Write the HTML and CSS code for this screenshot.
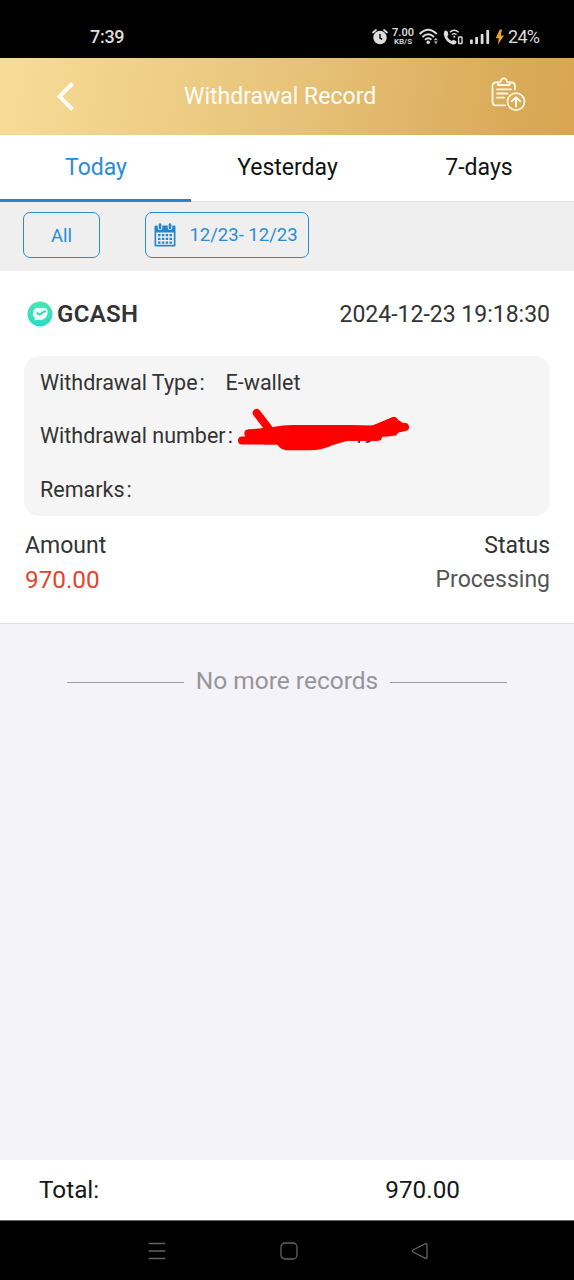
FILE: index.html
```html
<!DOCTYPE html>
<html lang="en">
<head>
<meta charset="utf-8">
<title>Withdrawal Record</title>
<link rel="stylesheet" href="styles.css">
</head>
<body>
<div class="status-bar">
  <span class="clock">7:39</span>
  <div class="indicators">
    <svg class="alarm" width="16" height="18" viewBox="0 0 16 18"><circle cx="8" cy="9.5" r="6.7" fill="#ddd"/><path d="M1 4.5 4 2M15 4.5 12 2" stroke="#ddd" stroke-width="1.7" stroke-linecap="round"/><path d="M8 6v4l2.2 1.3" fill="none" stroke="#000" stroke-width="1.4"/></svg>
    <div class="speed"><span class="rate">7.00</span><span class="unit">KB/S</span></div>
    <svg class="wifi" width="20" height="18" viewBox="0 0 20 18"><g fill="none" stroke="#ddd" stroke-width="1.9"><path d="M.7 6Q9.200 -2.600 17.700 6"/><path d="M3.400 9Q9.200 3.400 15 9"/><path d="M6 11.800Q9.200 8.800 12.400 11.800"/></g><circle cx="9.2" cy="14.300" r="1.7" fill="#ddd"/><path d="m14.800 12.2 2-2.5 2 2.5zM14.800 13.5l2 2.5 2-2.5z" fill="#bbb"/></svg>
    <svg class="call" width="21" height="18" viewBox="0 0 21 18"><path d="M2.6 2.2 4.8 3.8 5.4 6.8 4.2 8.4Q5.5 11.500 8.600 13l1.8-1.2 3 1.5v1.8Q12.2 17 9.8 16.4 2.2 14 .7 6.2.6 3.4 2.600 2.2Z" fill="#ddd"/><path d="M6.900 4.200Q11.200 .4 15.600 4.200M9 6.700Q11.300 4.600 13.500 6.700" fill="none" stroke="#ddd" stroke-width="1.3"/><circle cx="11.3" cy="8.800" r="1" fill="#ddd"/><rect x="15.600" y="9" width="3.4" height="6.5" rx=".6" fill="none" stroke="#ddd" stroke-width="1.4"/></svg>
    <svg class="signal" width="20" height="18" viewBox="0 0 20 18" fill="#ddd"><rect y="11.500" width="2.8" height="4.500" rx=".7"/><rect x="5.2" y="9" width="2.8" height="7" rx=".7"/><rect x="10.7" y="6" width="2.8" height="10" rx=".7"/><rect x="16.3" y="2" width="2.8" height="14" rx=".7"/></svg>
    <svg class="bolt" width="10" height="18" viewBox="0 0 10 18"><path d="M4.800 1.500 .7 10.200h3L3 16.500 9 7.400H5.800L7 1.500Z" fill="#e5a137"/></svg>
    <span class="battery">24%</span>
  </div>
</div>
<header class="header">
  <svg class="back" width="20" height="32" viewBox="0 0 20 32"><path d="M17.500 2.500 4.500 15.500 17.500 28.500" fill="none" stroke="#fffdf5" stroke-width="4"/></svg>
  <h1 class="title">Withdrawal Record</h1>
  <svg class="report" width="36" height="36" viewBox="0 0 36 36" fill="none" stroke="#fff8e4" stroke-width="1.8" stroke-linejoin="round" stroke-linecap="round"><path d="M8 5.500H6Q2.500 5.500 2.500 9V25q0 3.300 3.500 3.300H15M19.500 5.500H21.500q3.500 0 3.500 3.500V12.500"/><path d="M8 8V5.200h2.600q.4-3.800 3.200-3.800t3.200 3.800h2.600V8Z"/><path d="M7 12.300h14M7 16.500h10.500M7 20.700h7"/><circle cx="26" cy="24.700" r="8.500"/><path d="M26 29.500v-9.300M21.800 24.300 26 20.200l4.200 4.100" stroke-width="2"/></svg>
</header>
<nav class="tabs">
  <span class="tab active">Today</span>
  <span class="tab">Yesterday</span>
  <span class="tab">7-days</span>
</nav>
<div class="filters">
  <div class="chip chip-all">All</div>
  <div class="chip chip-date">
    <svg class="calendar" width="22" height="24" viewBox="0 0 22 24"><rect x=".5" y="2.500" width="21" height="21" rx="1.3" fill="#2486d2"/><path d="M2.200 9.500h17.600v12.300H2.200Z" fill="#efefef"/><path d="M4 12.200h14.500M4 15.900h14.500M4 19.600h14.500" stroke="#2486d2" stroke-width="2.300" stroke-dasharray="2.500 1.330"/><path d="M6 2v2.800M16 2v2.800" stroke="#efefef" stroke-width="4.600" stroke-linecap="round"/><path d="M6 1.500v3.500M16 1.500v3.500" stroke="#2486d2" stroke-width="2.600" stroke-linecap="round"/></svg>
    <span>12/23- 12/23</span>
  </div>
</div>
<main class="record">
  <div class="record-head">
    <svg class="gcash" width="26" height="26" viewBox="0 0 26 26"><defs><linearGradient id="mint" x2="0" y2="1"><stop stop-color="#50e4b3"/><stop offset="1" stop-color="#25dcc7"/></linearGradient></defs><circle cx="13" cy="13" r="12.500" fill="url(#mint)"/><path d="M8.500 7.300q2.500-1 4.500 0 4-1.500 7 .7 1.200 2.500.2 6-1.600 4-5.700 5h-5l-2 .5.300-2.500q-2.300-1.800-2-4.700.3-3.600 2.700-5Z" fill="#e9fff8"/><path d="m9.500 11.800 3.200 1.700 6-3.700" fill="none" stroke="#35ceb0" stroke-width="1.600"/></svg>
    <strong class="wallet">GCASH</strong>
    <span class="date">2024-12-23 19:18:30</span>
  </div>
  <div class="details">
    <div class="row"><span class="label type">Withdrawal Type</span><span class="colon">:</span><span class="value">E-wallet</span></div>
    <div class="row number-row"><span class="label number">Withdrawal number</span><span class="colon">:</span><span class="masked">19</span>
      <svg class="scribble" width="174" height="46" viewBox="0 0 174 46"><g fill="none" stroke="#f00" stroke-width="8" stroke-linecap="round" stroke-linejoin="round"><path d="M20.700 5 33 21"/><path d="M6 32.500H40M12.300 25.500H40M136 22 158 13M140 25 169 19M112 28.700h30"/></g><path d="M12 21.500 37 19Q46 17 57 17h57l24 .5L157 9l12 7-9 11.500q-8 1-16 1.500l-2 3.700H112L97 37Q86 42.300 74 42.300H51Q45 42 41 36.500H28Z" fill="#f00"/></svg>
    </div>
    <div class="row"><span class="label remarks">Remarks</span><span class="colon">:</span></div>
  </div>
  <div class="summary caption"><span class="amount-label">Amount</span><span class="status-label">Status</span></div>
  <div class="summary result"><span class="amount">970.00</span><span class="processing">Processing</span></div>
</main>
<section class="rest"><span class="line"></span><span class="end-text">No more records</span><span class="line"></span></section>
<footer class="total"><span class="total-label">Total:</span><span class="total-value">970.00</span></footer>
<div class="system-nav">
  <svg width="18" height="18" viewBox="0 0 18 18"><path d="M.7 1.500h16.600M.7 9h16.600M.7 16.500h16.600" stroke="#626262" stroke-width="1.3"/></svg>
  <svg width="18" height="18" viewBox="0 0 18 18"><rect x="1" y="1" width="16" height="16" rx="4" fill="none" stroke="#626262" stroke-width="1.3"/></svg>
  <svg width="18" height="18" viewBox="0 0 18 18"><path d="M2 8Q.7 9 2 10l12.500 6.300q1.500.5 1.500-1V2.700q0-1.500-1.500-1Z" fill="none" stroke="#626262" stroke-width="1.3"/></svg>
</div>
</body>
</html>
```
FILE: styles.css
```css
* { box-sizing: border-box; }
body { margin: 0; width: 574px; height: 1280px; display: flex; flex-direction: column; font-family: Roboto, "Liberation Sans", sans-serif; color: #333; background: #f3f3f9; overflow: hidden; }
svg { display: block; flex: none; }
span, strong { white-space: nowrap; }
.status-bar { height: 58px; background: #000; color: #ddd; display: flex; justify-content: space-between; align-items: center; padding: 15px 34px 0 90px; flex: none; }
.clock { font-size: 18px; font-weight: 500; letter-spacing: -.3px; }
.indicators { display: flex; align-items: center; }
.speed { display: flex; flex-direction: column; align-items: center; width: 22px; margin: 0 5px 0 4px; line-height: 9px; font-weight: 600; }
.rate { font-size: 11px; }
.unit { font-size: 8px; }
.wifi { margin-right: 4px; }
.call { margin-right: 6px; }
.signal { margin-right: 5px; }
.bolt { margin-right: 3px; }
.battery { font-size: 18px; width: 32px; letter-spacing: -.7px; }
.header { height: 77px; flex: none; background: linear-gradient(100deg, #f7dc98, #e8c47b 48%, #d9a856 92%, #d8a653); display: flex; align-items: center; padding: 0 48px 0 55px; }
.title { margin: 0 auto 0 109px; font-size: 23px; font-weight: 400; color: #fffdf6; }
.report { margin-bottom: 3px; }
.tabs { height: 67px; flex: none; display: grid; grid-template-columns: 191px 192px 191px; background: #fff; color: #111; font-size: 23px; border-bottom: 1px solid #e2e2e2; }
.tab { display: flex; align-items: center; justify-content: center; padding: 0 0 1px 1px; }
.tab.active { color: #2b8cd5; border-bottom: 3px solid #2486d2; padding-top: 1px; margin-bottom: -1px; }
.filters { height: 69px; flex: none; background: #efefef; display: flex; align-items: flex-start; padding: 10px 23px; gap: 45px; color: #2b8cd5; }
.chip { height: 46px; border: 1px solid #2b8cd5; border-radius: 7px; display: flex; align-items: center; justify-content: center; font-size: 18.500px; }
.chip-all { width: 77px; padding-top: 1px; }
.chip-date { width: 164px; gap: 13px; padding-right: 2px; }
.record { height: 353px; flex: none; background: #fff; border-bottom: 1px solid #dedee2; padding: 30px 24px 0; }
.record-head { height: 26px; display: flex; align-items: center; padding-left: 3px; }
.wallet { font-size: 24px; font-weight: 600; margin-left: 4px; letter-spacing: .3px; }
.date { margin-left: auto; font-size: 23px; }
.details { margin-top: 29px; height: 160px; padding: 0 16px; border-radius: 15px; background: #f5f5f5; font-size: 21.500px; }
.row { height: 53.500px; display: flex; align-items: center; position: relative; }
.number-row { padding-bottom: 1px; }
.colon { width: 8px; margin-left: 2px; }
.value { margin-left: 18px; }
.masked { margin-left: 117px; font-size: 20px; letter-spacing: -1px; }
.scribble { position: absolute; left: 196px; top: -2px; }
.summary { display: flex; justify-content: space-between; align-items: center; padding-left: 1px; }
.caption { height: 35px; margin-top: 12px; font-size: 23px; }
.result { height: 33px; font-size: 23px; }
.amount { color: #e0462f; font-size: 24.300px; }
.processing { color: #555; }
.rest { flex: 1; display: flex; align-items: flex-start; justify-content: center; gap: 12px; padding-top: 42px; color: #969699; font-size: 24.500px; }
.line { width: 117px; height: 1px; background: #9c9c9f; margin-top: 16px; }
.total { height: 60px; flex: none; background: #fff; color: #171717; display: flex; align-items: center; justify-content: space-between; padding: 0 114px 2px 39px; font-size: 24.300px; }
.system-nav { height: 60px; flex: none; background: #000; border-top: 1px solid #666; display: flex; align-items: center; justify-content: space-between; padding: 0 145px 0 148px; }
```
